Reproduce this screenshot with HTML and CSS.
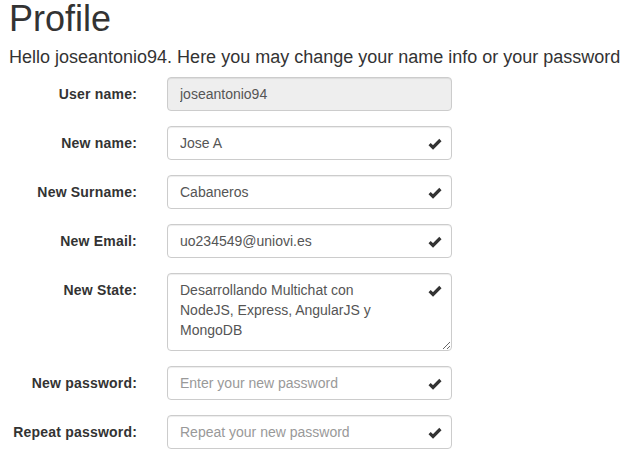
FILE: index.html
```html
<!DOCTYPE html>
<html>
<head>
<meta charset="utf-8">
<link rel="stylesheet" href="styles.css">
</head>
<body>
<div class="page">
  <h1 class="title">Profile</h1>
  <p class="intro">Hello joseantonio94. Here you may change your name info or your password</p>
  <form class="form">
    <div class="row">
      <label class="label">User name:</label>
      <div class="field">
        <input class="control" type="text" value="joseantonio94" disabled>
      </div>
    </div>
    <div class="row">
      <label class="label">New name:</label>
      <div class="field">
        <input class="control" type="text" value="Jose A">
        <span class="feedback"><svg width="14" height="12" viewBox="0 0 14 12"><polyline points="1.6,6.2 5,9.4 12.4,2" fill="none" stroke="#333" stroke-width="3.2"/></svg></span>
      </div>
    </div>
    <div class="row">
      <label class="label">New Surname:</label>
      <div class="field">
        <input class="control" type="text" value="Cabaneros">
        <span class="feedback"><svg width="14" height="12" viewBox="0 0 14 12"><polyline points="1.6,6.2 5,9.4 12.4,2" fill="none" stroke="#333" stroke-width="3.2"/></svg></span>
      </div>
    </div>
    <div class="row">
      <label class="label">New Email:</label>
      <div class="field">
        <input class="control" type="text" value="uo234549@uniovi.es">
        <span class="feedback"><svg width="14" height="12" viewBox="0 0 14 12"><polyline points="1.6,6.2 5,9.4 12.4,2" fill="none" stroke="#333" stroke-width="3.2"/></svg></span>
      </div>
    </div>
    <div class="row">
      <label class="label">New State:</label>
      <div class="field">
        <textarea class="control area">Desarrollando Multichat con NodeJS, Express, AngularJS y MongoDB</textarea>
        <span class="feedback"><svg width="14" height="12" viewBox="0 0 14 12"><polyline points="1.6,6.2 5,9.4 12.4,2" fill="none" stroke="#333" stroke-width="3.2"/></svg></span>
      </div>
    </div>
    <div class="row">
      <label class="label">New password:</label>
      <div class="field">
        <input class="control" type="password" placeholder="Enter your new password">
        <span class="feedback"><svg width="14" height="12" viewBox="0 0 14 12"><polyline points="1.6,6.2 5,9.4 12.4,2" fill="none" stroke="#333" stroke-width="3.2"/></svg></span>
      </div>
    </div>
    <div class="row">
      <label class="label">Repeat password:</label>
      <div class="field">
        <input class="control" type="password" placeholder="Repeat your new password">
        <span class="feedback"><svg width="14" height="12" viewBox="0 0 14 12"><polyline points="1.6,6.2 5,9.4 12.4,2" fill="none" stroke="#333" stroke-width="3.2"/></svg></span>
      </div>
    </div>
  </form>
</div>
</body>
</html>
```
FILE: styles.css
```css
* { box-sizing: border-box; }
html, body { margin: 0; padding: 0; background: #fff; }
body {
  font-family: "Liberation Sans", Arial, Helvetica, sans-serif;
  font-size: 14px;
  line-height: 20px;
  color: #333;
}
.page { padding: 0 0 0 9px; }
.title {
  margin: 0;
  font-size: 36px;
  line-height: 38px;
  font-weight: 500;
}
.intro {
  margin: 9px 0 0 0;
  font-size: 18px;
  line-height: 20px;
}
.form { margin-top: 10px; margin-left: -9px; }
.row {
  display: flex;
  align-items: flex-start;
  margin-bottom: 15px;
}
.label {
  width: 137px;
  margin-right: 30px;
  padding-top: 7px;
  text-align: right;
  font-weight: bold;
  line-height: 20px;
  letter-spacing: 0.2px;
}
.field {
  position: relative;
  width: 285px;
}
.control {
  display: block;
  width: 100%;
  height: 34px;
  margin: 0;
  padding: 6px 42px 6px 12px;
  font-family: "Liberation Sans", Arial, Helvetica, sans-serif;
  font-size: 14px;
  line-height: 20px;
  color: #555;
  background: #fff;
  border: 1px solid #ccc;
  border-radius: 4px;
  box-shadow: inset 0 1px 1px rgba(0,0,0,.075);
  outline: none;
}
.control:disabled { background: #eee; color: #555; opacity: 1; }
.control::placeholder { color: #999; opacity: 1; }
.area { height: 78px; resize: vertical; overflow: hidden; }
.feedback {
  position: absolute;
  top: 0;
  right: 0;
  width: 34px;
  height: 34px;
  display: flex;
  align-items: center;
  justify-content: center;
  pointer-events: none;
}
.feedback svg { display: block; margin-top: 1px; }
```
